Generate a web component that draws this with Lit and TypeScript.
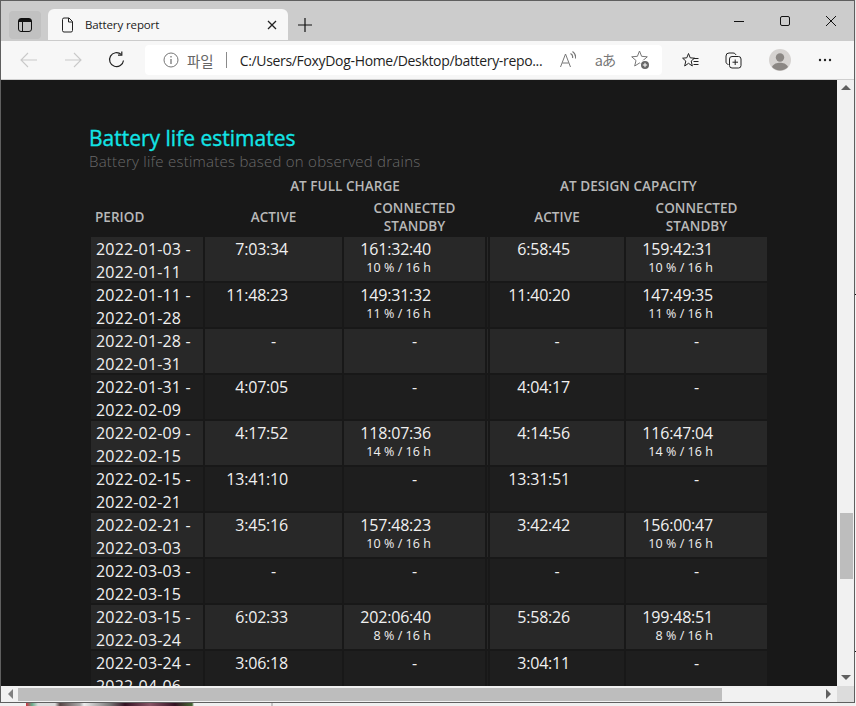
import { LitElement, html, css, svg } from "lit";
import { customElement } from "lit/decorators.js";

type Row = [string, string, string, string, string, string, string];
const rows: Row[] = [
  ["2022-01-03", "2022-01-11", "7:03:34", "161:32:40", "10 % / 16 h", "6:58:45", "159:42:31"],
  ["2022-01-11", "2022-01-28", "11:48:23", "149:31:32", "11 % / 16 h", "11:40:20", "147:49:35"],
  ["2022-01-28", "2022-01-31", "-", "-", "", "-", "-"],
  ["2022-01-31", "2022-02-09", "4:07:05", "-", "", "4:04:17", "-"],
  ["2022-02-09", "2022-02-15", "4:17:52", "118:07:36", "14 % / 16 h", "4:14:56", "116:47:04"],
  ["2022-02-15", "2022-02-21", "13:41:10", "-", "", "13:31:51", "-"],
  ["2022-02-21", "2022-03-03", "3:45:16", "157:48:23", "10 % / 16 h", "3:42:42", "156:00:47"],
  ["2022-03-03", "2022-03-15", "-", "-", "", "-", "-"],
  ["2022-03-15", "2022-03-24", "6:02:33", "202:06:40", "8 % / 16 h", "5:58:26", "199:48:51"],
  ["2022-03-24", "2022-04-06", "3:06:18", "-", "", "3:04:11", "-"],
];

const icon = (w: number, h: number, body: unknown, cls = "") =>
  html`<svg class=${cls} width=${w} height=${h} viewBox="0 0 ${w} ${h}" fill="none" stroke="currentColor" stroke-width="1">${body}</svg>`;

@customElement("app-root")
export class AppRoot extends LitElement {
  static styles = css`
    :host { display: block; width: 856px; height: 706px; overflow: hidden; background: #f2f2f2; font-family: "Open Sans", "Noto Sans", sans-serif; }
    .shell { display: flex; height: 706px; }
    .main { width: 855px; display: flex; flex-direction: column; }
    .edge { width: 1px; height: 706px; background: linear-gradient(#e8e8e8 294px, #111 294px, #111 295px, #f4f4f4 295px, #f4f4f4 651px, #111 651px, #111 652px, #f4f4f4 652px); }
    .window { width: 855px; height: 703px; box-sizing: border-box; border: 1px solid #5f5f5f; display: flex; flex-direction: column; }
    .wall { height: 3px; background: linear-gradient(90deg, #f0f0f0 26px, #c34 26px, #6a8 32px, #ddd 38px, #ddd 55px, #544 60px, #aaa 80px, #eee 84px, #777 110px, #312 125px, #856 150px, #312 175px, #463 192px, #f0f0f0 194px, #f0f0f0 271px, #999 272px, #f0f0f0 273px); }

    .titlebar { height: 40px; background: #cccccc; display: flex; align-items: flex-start; color: #111; }
    .sidebtn { width: 32px; height: 28px; margin: 10px 7px 0 8px; background: #c1c1c1; border-radius: 4px; display: flex; align-items: center; justify-content: center; }
    .tab { width: 240px; height: 31px; margin-top: 8px; background: #f7f7f7; border-radius: 6px 6px 0 0; display: flex; align-items: center; box-sizing: border-box; padding: 0 8px 0 13px; font-size: 11.5px; color: #222; }
    .tab .label { margin-left: 11px; flex: 1; letter-spacing: -0.12px; }
    .plus { margin: 9px 0 0 2px; width: 30px; height: 30px; display: flex; align-items: center; justify-content: center; }
    .spacer { flex: 1; }
    .winbtns { display: flex; margin-top: 10px; }
    .winbtns div { width: 46px; height: 20px; display: flex; align-items: center; justify-content: center; }

    .toolbar { height: 39px; box-sizing: border-box; background: #f7f7f7; border-bottom: 1px solid #cfcfcf; display: flex; align-items: center; color: #222; }
    .nav { width: 44px; display: flex; justify-content: center; }
    .nav.off { color: #c9c9c9; }
    .nav.first { margin-left: 6px; }
    .addr { width: 517px; height: 30px; margin-left: 6px; background: #fff; border-radius: 4px; display: flex; align-items: center; box-sizing: border-box; padding-left: 18px; color: #6b6b6b; }
    .scheme { font-family: "Noto Sans CJK KR", sans-serif; font-size: 14.5px; margin-left: 8px; color: #666; }
    .sep { width: 1px; height: 16px; background: #8a8a8a; margin: 0 13px 0 12px; }
    .url { width: 305px; font-size: 14px; color: #1f1f1f; white-space: nowrap; letter-spacing: -0.33px; font-family: "Open Sans", sans-serif; }
    .aicons { display: flex; align-items: center; margin-left: 15px; color: #777; }
    .aa { font-family: "Noto Sans CJK JP", sans-serif; font-size: 14.5px; line-height: 18px; width: 17px; margin: 0 19px 0 19px; white-space: nowrap; letter-spacing: -1.2px; color: #777; }
    .tools { display: flex; align-items: center; color: #222; margin-left: 20px; }
    .tools > svg { display: block; }
    .gap { width: 26px; }
    .avatar { margin: 0 27px 0 27px; }

    .view { flex: 1; min-height: 0; display: flex; }
    .page { width: 836px; background: #181818; overflow: hidden; box-sizing: border-box; padding: 44px 0 0 88px; }
    h1 { margin: 0; font-size: 21px; line-height: 28px; font-weight: 400; color: #12e4e6; -webkit-text-stroke: 0.35px #12e4e6; }
    .sub { font-size: 15px; line-height: 19px; color: #6a6a6a; font-weight: 300; letter-spacing: 0.25px; }

    table { border-collapse: separate; border-spacing: 2px; table-layout: fixed; width: 680px; margin-top: 4px; }
    th { font-size: 13.5px; line-height: 18px; font-weight: 600; color: #b8b8b8; text-align: center; padding: 0; letter-spacing: 0.05px; }
    .top th { height: 18px; padding-bottom: 1px; }
    .heads th { height: 37px; }
    th.left { text-align: left; padding-left: 4px; }
    td { padding: 0; vertical-align: top; color: #f0f0f0; font-size: 16px; line-height: 23px; }
    .box { height: 44px; box-sizing: border-box; padding-top: 1px; white-space: nowrap; }
    tr.odd td { background: #282828; }
    tr.even td { background: #1e1e1e; }
    .period { padding-left: 5px; letter-spacing: 0.17px; }
    .num { text-align: right; padding-right: 54px; letter-spacing: -0.2px; }
    .dash { text-align: center; }
    .note { display: block; font-size: 12.5px; line-height: 13px; letter-spacing: 0.05px; }
    .c0 { width: 112px; } .c1 { width: 137px; } .c2 { width: 141px; } .c3 { width: 1px; } .c4 { width: 134px; } .c5 { width: 141px; }

    .vbar { width: 17px; background: #f1f1f1; display: flex; flex-direction: column; align-items: center; }
    .thumb-v { width: 13px; height: 66px; margin-top: 423px; margin-left: 1px; background: #bdbdbd; }
    .arrow-d { margin-top: auto; margin-bottom: 6px; width: 0; height: 0; border: 5px solid transparent; border-top: 5px solid #606060; border-bottom: 0; }
    .arrow-u { width: 0; height: 0; margin-top: 5px; border: 5px solid transparent; border-bottom: 5px solid #606060; border-top: 0; }
    .hbar { height: 16px; display: flex; background: #f1f1f1; align-items: center; flex: none; }
    .arrow-l { width: 0; height: 0; margin-left: 7px; border: 5px solid transparent; border-right: 5px solid #808080; border-left: 0; }
    .thumb-h { width: 704px; height: 13px; margin-left: 5px; background: #bdbdbd; }
    .arrow-r { width: 0; height: 0; margin-left: auto; margin-right: 6px; border: 5px solid transparent; border-left: 5px solid #606060; border-right: 0; }
    .corner { width: 17px; height: 16px; background: #dcdcdc; flex: none; }
    .htrack { width: 836px; height: 16px; display: flex; align-items: center; }
  `;

  private titlebar() {
    return html`<div class="titlebar">
      <div class="sidebtn">${icon(16, 16, svg`<rect x="1.5" y="1.5" width="13" height="13" rx="2.5"/><path d="M5.5 1.5V14.5" /><path d="M2 2h12v3H2z" fill="currentColor" stroke="none"/>`)}</div>
      <div class="tab">
        ${icon(13, 16, svg`<path d="M1.500 2.500a1.500 1.500 0 0 1 1.500-1.500h5l3.500 3.500V13.500a1.500 1.500 0 0 1-1.500 1.500H3a1.500 1.500 0 0 1-1.500-1.500z"/><path d="M7.500 1V5H11.500"/>`)}
        <span class="label">Battery report</span>
        ${icon(16, 16, svg`<path d="M4 4L12 12M12 4L4 12" stroke-width="1.3"/>`)}
      </div>
      <div class="plus">${icon(16, 16, svg`<path d="M8 1V15M1 8H15" stroke-width="1.2"/>`)}</div>
      <div class="spacer"></div>
      <div class="winbtns">
        <div>${icon(12, 12, svg`<path d="M1 6.500H11"/>`)}</div>
        <div>${icon(12, 12, svg`<rect x="1.500" y="1.500" width="9" height="9" rx="1.500"/>`)}</div>
        <div>${icon(12, 12, svg`<path d="M1 1L11 11M11 1L1 11"/>`)}</div>
      </div>
    </div>`;
  }

  private toolbar() {
    const arrow = (d: string) => icon(18, 18, svg`<path d=${d} stroke-width="1.1"/>`);
    return html`<div class="toolbar">
      <div class="nav off first">${arrow("M1 9H17M8 2L1 9L8 16")}</div>
      <div class="nav off">${arrow("M1 9H17M10 2L17 9L10 16")}</div>
      <div class="nav">${icon(18, 18, svg`<path d="M15.500 9.500A7 7 0 1 1 13.200 3.400" stroke-width="1.2"/><path d="M13.800 0.500V4.200H10" stroke-width="1.2"/>`)}</div>
      <div class="addr">
        ${icon(16, 16, svg`<circle cx="8" cy="8" r="7" stroke="#777"/><path d="M8 7V12M8 4V5.500" stroke="#777" stroke-width="1.3"/>`)}
        <span class="scheme">파일</span>
        <span class="sep"></span>
        <span class="url">C:/Users/FoxyDog-Home/Desktop/battery-repo...</span>
        <div class="aicons">
          ${icon(16, 18, svg`<path d="M0.500 16L5.500 3L10.500 16M2.300 12H8.700"/><path d="M10.500 2.500a4 4 0 0 1 2 4.500M12.500 0.500a7 7 0 0 1 3 7" stroke-width="1.2"/>`)}
          <span class="aa">aあ</span>
          ${icon(19, 20, svg`<path d="M8.500 1L10.600 6.300L16.300 6.800L12 10.500L13.300 16L8.500 13L3.700 16L5 10.500L0.700 6.800L6.400 6.300Z" stroke-linejoin="round"/><circle cx="14" cy="15" r="5" fill="#fff" stroke="none"/><circle cx="14" cy="15" r="4" fill="#666" stroke="none"/><path d="M14 12.800V17.200M11.800 15H16.200" stroke="#fff"/>`)}
        </div>
      </div>
      <div class="tools">
        ${icon(17, 17, svg`<path d="M6.500 1.500L8.200 5.800L12.500 6.200L9.200 9L10.300 14L6.500 11.300L2.700 14L3.800 9L0.600 6.200L4.800 5.800Z" stroke-linejoin="round"/><path d="M11.500 6.500H16.500M11.500 9.500H16.500M11.500 12.500H16.500" />`)}
        <span class="gap"></span>
        ${icon(17, 17, svg`<path d="M3.500 12.500c-1.500-.3-2.500-1.200-2.500-2.500V4a3 3 0 0 1 3-3H8c1.500 0 2.500.8 3 2"/><rect x="4.500" y="4.500" width="11.500" height="11.500" rx="2.500"/><path d="M10.200 7.500V13M7.500 10.200H13"/>`)}
        <svg class="avatar" width="22" height="22" viewBox="0 0 22 22"><circle cx="11" cy="11" r="11" fill="#d6d3d1"/><circle cx="11" cy="8.500" r="4.200" fill="#8b8784"/><path d="M3 18c1.500-3.500 5-4.300 8-4.300s6.500.8 8 4.300a11 11 0 0 1-16 0z" fill="#8b8784"/></svg>
        ${icon(14, 4, svg`<circle cx="2" cy="2" r="1.200" fill="currentColor" stroke="none"/><circle cx="7" cy="2" r="1.200" fill="currentColor" stroke="none"/><circle cx="12" cy="2" r="1.200" fill="currentColor" stroke="none"/>`)}
      </div>
    </div>`;
  }

  private cell(value: string, note = "") {
    if (value === "-") return html`<td><div class="box dash">-</div></td>`;
    return html`<td><div class="box num">${value}${note ? html`<span class="note">${note}</span>` : ""}</div></td>`;
  }

  private table() {
    return html`<table>
      <colgroup><col class="c0" /><col class="c1" /><col class="c2" /><col class="c3" /><col class="c4" /><col class="c5" /></colgroup>
      <thead>
        <tr class="top"><th></th><th colspan="2">AT FULL CHARGE</th><th></th><th colspan="2">AT DESIGN CAPACITY</th></tr>
        <tr class="heads">
          <th class="left">PERIOD</th><th>ACTIVE</th><th>CONNECTED<br />STANDBY</th><th></th><th>ACTIVE</th><th>CONNECTED<br />STANDBY</th>
        </tr>
      </thead>
      <tbody>
        ${rows.map((r, i) => html`<tr class=${i % 2 ? "even" : "odd"}>
          <td><div class="box period">${r[0]} -<br />${r[1]}</div></td>
          ${this.cell(r[2])}
          ${this.cell(r[3], r[4])}
          <td></td>
          ${this.cell(r[5])}
          ${this.cell(r[6], r[4])}
        </tr>`)}
      </tbody>
    </table>`;
  }

  render() {
    return html`<div class="shell">
      <div class="main">
        <div class="window">
          ${this.titlebar()}
          ${this.toolbar()}
          <div class="view">
            <div class="page">
              <h1>Battery life estimates</h1>
              <div class="sub">Battery life estimates based on observed drains</div>
              ${this.table()}
            </div>
            <div class="vbar">
              <div class="arrow-u"></div>
              <div class="thumb-v"></div>
              <div class="arrow-d"></div>
            </div>
          </div>
          <div class="hbar">
            <div class="htrack">
              <div class="arrow-l"></div>
              <div class="thumb-h"></div>
              <div class="arrow-r"></div>
            </div>
            <div class="corner"></div>
          </div>
        </div>
        <div class="wall"></div>
      </div>
      <div class="edge"></div>
    </div>`;
  }
}
